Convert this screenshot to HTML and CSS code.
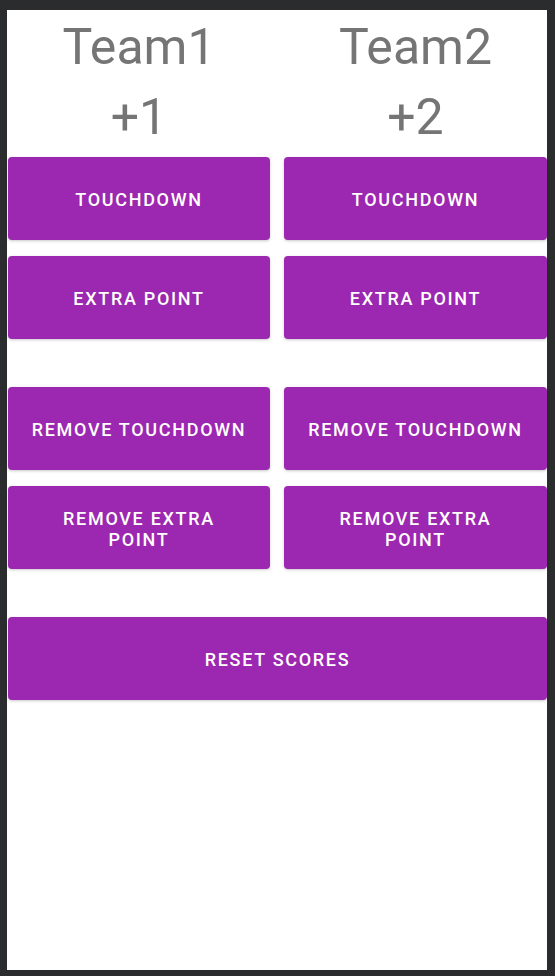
FILE: index.html
```html
<!DOCTYPE html>
<html>
<head>
<meta charset="utf-8">
<link rel="stylesheet" href="styles.css">
</head>
<body>
<div class="screen">
  <div class="grid">
    <div class="team">
      <div class="name">Team1</div>
      <div class="score">+1</div>
    </div>
    <div class="team">
      <div class="name">Team2</div>
      <div class="score">+2</div>
    </div>
    <button class="btn">Touchdown</button>
    <button class="btn">Touchdown</button>
    <button class="btn">Extra point</button>
    <button class="btn">Extra point</button>
    <button class="btn gap-top">Remove touchdown</button>
    <button class="btn gap-top">Remove touchdown</button>
    <button class="btn">Remove extra<br>point</button>
    <button class="btn">Remove extra<br>point</button>
    <button class="btn wide gap-top">Reset scores</button>
  </div>
</div>
</body>
</html>
```
FILE: styles.css
```css
html, body {
  margin: 0;
  padding: 0;
  background: #2b2c2e;
}
body {
  width: 555px;
  height: 976px;
  overflow: hidden;
  font-family: Roboto, "Noto Sans", sans-serif;
}
.screen {
  margin: 10px 8px 0 7px;
  width: 540px;
  height: 960px;
  background: #ffffff;
  padding-left: 1px;
  box-sizing: border-box;
}
.grid {
  display: grid;
  grid-template-columns: 262px 263px;
  column-gap: 14px;
  row-gap: 16px;
  padding-top: 2px;
}
.team {
  text-align: center;
  color: #757575;
  font-size: 50px;
  line-height: 70px;
  margin-bottom: -11px;
}
.btn {
  height: 83px;
  border: none;
  border-radius: 4px;
  background: #9c27b0;
  color: #ffffff;
  font-family: Roboto, "Noto Sans", sans-serif;
  font-weight: 500;
  font-size: 18px;
  line-height: 21px;
  letter-spacing: 1.7px;
  text-transform: uppercase;
  box-shadow: 0 1px 3px rgba(0, 0, 0, 0.22);
  padding: 2px 8px 0;
  margin: 0;
}
.gap-top {
  margin-top: 32px;
}
.wide {
  grid-column: 1 / span 2;
}
```
